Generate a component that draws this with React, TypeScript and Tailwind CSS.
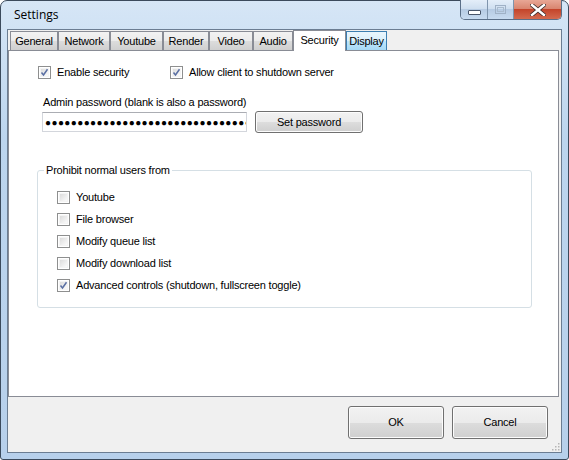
import React from 'react';

const font = { fontFamily: '"Liberation Sans", Arial, sans-serif' };

const CheckBox: React.FC<{ checked?: boolean }> = ({ checked }) => (
  <span className="w-[13px] h-[13px] border border-[#8e8f8f] bg-white p-[1px] flex-shrink-0 flex">
    <span className="flex-1 bg-[linear-gradient(135deg,#dcdcdc,#fbfbfb)] border border-[#f4f4f4] relative">
      {checked && (
        <svg viewBox="0 0 9 9" className="absolute -left-[1px] -top-[1px] w-[9px] h-[9px]">
          <path d="M1.5 4.5 L3.5 7 L7.5 1.2" fill="none" stroke="#5a6fa3" strokeWidth="1.5" />
        </svg>
      )}
    </span>
  </span>
);

const CheckRow: React.FC<{ label: string; checked?: boolean; className?: string }> = ({ label, checked, className }) => (
  <div className={`flex items-center gap-[6px] h-[13px] ${className ?? ''}`}>
    <CheckBox checked={checked} />
    <span className="leading-[13px] whitespace-nowrap">{label}</span>
  </div>
);

const Tab: React.FC<{ label: string; w: string; state?: 'active' | 'hover' }> = ({ label, w, state }) => {
  if (state === 'active') {
    return (
      <div className={`${w} h-[21px] -mb-px bg-white border border-b-0 border-[#898c95] flex items-center justify-center pb-[1px] relative z-10`}>
        {label}
      </div>
    );
  }
  const look =
    state === 'hover'
      ? 'bg-[linear-gradient(#eaf6fd,#d9f0fc_50%,#bee6fd_50%,#a7d9f5)] border-[#3c7fb1]'
      : 'bg-[linear-gradient(#f2f2f2,#ebebeb_50%,#dddddd_50%,#cfcfcf)] border-[#898c95]';
  return (
    <div className={`${w} h-[19px] border border-b-0 ${look} flex items-center justify-center`}>
      {label}
    </div>
  );
};

const WinButton: React.FC<{ label: string; className: string }> = ({ label, className }) => (
  <button
    className={`${className} border border-[#707070] rounded-[3px] bg-[linear-gradient(#f2f2f2,#ebebeb_50%,#dddddd_50%,#cfcfcf)] shadow-[inset_0_0_0_1px_#fcfcfc] text-black flex items-center justify-center`}
  >
    {label}
  </button>
);

export default function App() {
  const dots = '●'.repeat(33);
  return (
    <div
      className="w-[569px] h-[460px] border border-[#3b4a5c] rounded-t-[7px] rounded-b-[3px] bg-[linear-gradient(#d6e6f6,#bcd5ee_30%,#b7d0eb)] flex flex-col px-[6px] pb-[6px] text-[11px] tracking-[-0.2px] text-black"
      style={font}
    >
      {/* title bar */}
      <div className="h-[28px] flex items-start justify-between">
        <span className="pl-[7px] pt-[5px] text-[12px] tracking-normal text-black" style={{ fontFamily: '"Open Sans", "Liberation Sans", sans-serif' }}>
          Settings
        </span>
        <div className="flex -mt-px h-[20px] border border-t-0 border-[#5a6f88] rounded-b-[5px] overflow-hidden">
          <div className="w-[27px] bg-[linear-gradient(#e4eef9,#cfdff0_45%,#b6cbe3_50%,#c7dbf0)] border-r border-[#7f95ad] flex items-center justify-center">
            <span className="w-[13px] h-[5px] mt-[5px] bg-white border border-[#49566a] rounded-[1px]" />
          </div>
          <div className="w-[26px] bg-[linear-gradient(#e4eef9,#cfdff0_45%,#b6cbe3_50%,#c7dbf0)] border-r border-[#7f95ad] flex items-center justify-center">
            <span className="w-[11px] h-[9px] border border-[#9fb1c6] flex items-center justify-center">
              <span className="w-[7px] h-[5px] border border-[#a9bbce]" />
            </span>
          </div>
          <div className="w-[47px] bg-[linear-gradient(#e8a795,#d98670_45%,#c4452b_50%,#d36a4f)] flex items-center justify-center">
            <svg viewBox="0 0 16 12" className="w-[16px] h-[12px]">
              <path d="M2 1 L14 11 M14 1 L2 11" stroke="#3a2a28" strokeWidth="4" strokeLinecap="square" />
              <path d="M2 1 L14 11 M14 1 L2 11" stroke="#ffffff" strokeWidth="2.4" strokeLinecap="square" />
            </svg>
          </div>
        </div>
      </div>

      {/* client */}
      <div className="flex-1 border border-[#6b7d92] bg-[#f0f0f0] flex flex-col">
        <div className="h-[20px] flex items-end pl-[2px]">
          <Tab label="General" w="w-[48px]" />
          <Tab label="Network" w="w-[52px]" />
          <Tab label="Youtube" w="w-[53px]" />
          <Tab label="Render" w="w-[46px]" />
          <Tab label="Video" w="w-[44px]" />
          <Tab label="Audio" w="w-[40px]" />
          <Tab label="Security" w="w-[53px]" state="active" />
          <Tab label="Display" w="w-[41px]" state="hover" />
        </div>

        <div className="flex-1 mr-[2px] bg-white border border-[#898c95] flex flex-col">
          <div className="flex mt-[15px] pl-[29px]">
            <CheckRow label="Enable security" checked className="w-[132px]" />
            <CheckRow label="Allow client to shutdown server" checked />
          </div>

          <div className="pl-[34px] mt-[17px] leading-[13px]">Admin password (blank is also a password)</div>
          <div className="flex items-center pl-[33px] mt-[2px] gap-[8px]">
            <div className="w-[205px] h-[20px] border border-[#d3d6dc] border-t-[#abadb3] overflow-hidden flex items-center pl-[2px] whitespace-nowrap text-[10px] tracking-[0.4px]">
              {dots}
            </div>
            <WinButton label="Set password" className="w-[108px] h-[22px]" />
          </div>

          <fieldset className="ml-[28px] mt-[31px] w-[495px] border border-[#d5dfe5] rounded-[3px] pb-[15px]">
            <legend className="ml-[6px] px-[2px] leading-[13px]">Prohibit normal users from</legend>
            <div className="flex flex-col gap-[9px] mt-[14px] pl-[19px]">
              <CheckRow label="Youtube" />
              <CheckRow label="File browser" />
              <CheckRow label="Modify queue list" />
              <CheckRow label="Modify download list" />
              <CheckRow label="Advanced controls (shutdown, fullscreen toggle)" checked />
            </div>
          </fieldset>
        </div>

        <div className="h-[55px] flex justify-end items-start pt-[9px] pr-[13px] gap-[8px] relative">
          <WinButton label="OK" className="w-[96px] h-[33px]" />
          <WinButton label="Cancel" className="w-[96px] h-[33px]" />
          <svg viewBox="0 0 8 8" className="absolute right-[1px] bottom-[1px] w-[8px] h-[8px]">
            {[
              [6, 0],
              [6, 3],
              [3, 3],
              [6, 6],
              [3, 6],
              [0, 6],
            ].map(([x, y]) => (
              <rect key={`${x}-${y}`} x={x} y={y} width="1.5" height="1.5" fill="#b5b5b5" />
            ))}
          </svg>
        </div>
      </div>
    </div>
  );
}
